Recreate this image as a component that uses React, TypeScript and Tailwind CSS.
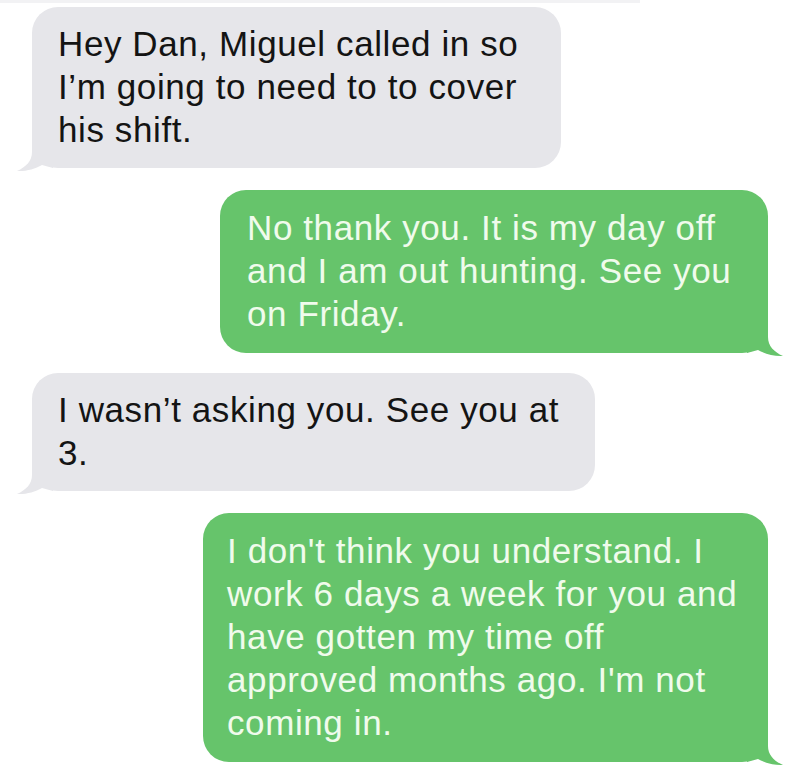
import React from "react";

const font = { fontFamily: '"Liberation Sans", Arial, sans-serif' };

function LeftTail() {
  return (
    <svg
      className="absolute left-[-15px] bottom-[-4px]"
      width="36"
      height="30"
      viewBox="0 0 36 30"
    >
      <path
        d="M15 0 L15 10 C15 19 9 25 0 29 C9 29.5 18 27 25 23 L36 26 L36 0 Z"
        fill="#e6e6ea"
      />
    </svg>
  );
}

function RightTail() {
  return (
    <svg
      className="absolute right-[-15px] bottom-[-4px]"
      width="36"
      height="30"
      viewBox="0 0 36 30"
    >
      <path
        d="M21 0 L21 10 C21 19 27 25 36 29 C27 29.5 18 27 11 23 L0 26 L0 0 Z"
        fill="#66c46b"
      />
    </svg>
  );
}

function Gray({ lines, className }: { lines: string[]; className: string }) {
  return (
    <div className={`relative rounded-[26px] bg-[#e6e6ea] pl-[26px] pt-[15px] pb-[17px] ${className}`}>
      <LeftTail />
      <div className="relative text-[35px] leading-[43px] tracking-[0.6px] text-[#141414]" style={font}>
        {lines.map((l, i) => (
          <div key={i} className="whitespace-nowrap">{l}</div>
        ))}
      </div>
    </div>
  );
}

function Green({ lines, className }: { lines: string[]; className: string }) {
  return (
    <div className={`relative rounded-[26px] bg-[#66c46b] pt-[16px] pb-[18px] ${className}`}>
      <RightTail />
      <div className="relative text-[35px] leading-[43px] tracking-[0.6px] text-[#f0fbec]" style={font}>
        {lines.map((l, i) => (
          <div key={i} className="whitespace-nowrap">{l}</div>
        ))}
      </div>
    </div>
  );
}

export default function App() {
  return (
    <div className="relative w-[800px] h-[776px] overflow-hidden bg-white">
      <div className="h-[3px] w-[640px] bg-[#f2f2f4]" />
      <div className="flex flex-col">
        <Gray
          className="ml-[32px] mt-[4px] w-[529px]"
          lines={["Hey Dan, Miguel called in so", "I\u2019m going to need to to cover", "his shift."]}
        />
        <Green
          className="ml-[220px] mt-[22px] w-[548px] pl-[27px]"
          lines={["No thank you. It is my day off", "and I am out hunting. See you", "on Friday."]}
        />
        <Gray
          className="ml-[32px] mt-[20px] w-[563px]"
          lines={["I wasn\u2019t asking you. See you at", "3."]}
        />
        <Green
          className="ml-[203px] mt-[22px] w-[565px] pl-[24px]"
          lines={[
            "I don't think you understand. I",
            "work 6 days a week for you and",
            "have gotten my time off",
            "approved months ago. I'm not",
            "coming in.",
          ]}
        />
      </div>
    </div>
  );
}
